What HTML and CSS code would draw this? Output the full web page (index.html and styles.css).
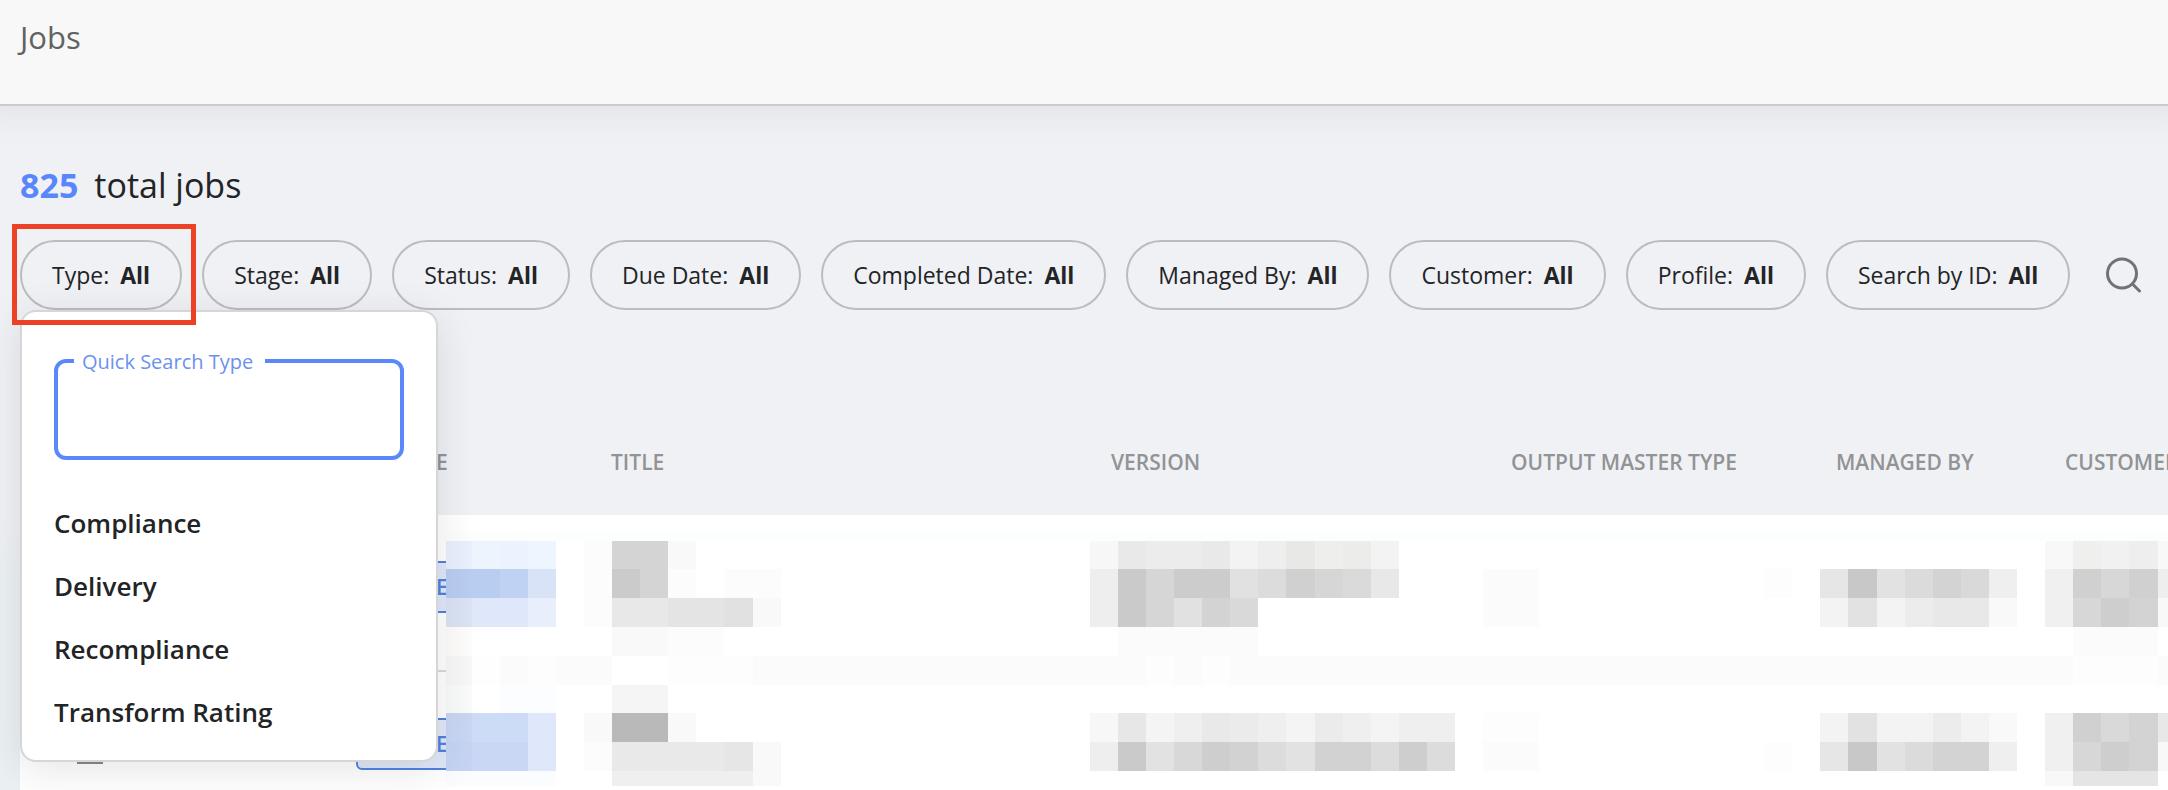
FILE: index.html
```html
<!DOCTYPE html>
<html lang="en">
<head>
<meta charset="utf-8">
<title>Jobs</title>
<link rel="stylesheet" href="styles.css">
</head>
<body>
<header class="topbar"><h1 class="topbar-title">Jobs</h1></header>
<main class="content">
  <p class="total"><strong class="total-count">825</strong><span>total jobs</span></p>

  <div class="filters">
    <div class="filter">
      <button class="pill" type="button" aria-expanded="true">Type: <b>All</b></button>
      <div class="menu">
        <div class="field">
          <label class="field-label" for="quick-search">Quick Search Type</label>
          <input class="field-input" id="quick-search" type="text">
        </div>
        <div class="options">
          <button class="option" type="button">Compliance</button>
          <button class="option" type="button">Delivery</button>
          <button class="option" type="button">Recompliance</button>
          <button class="option" type="button">Transform Rating</button>
        </div>
      </div>
      <div class="highlight"></div>
    </div>
    <button class="pill" type="button">Stage: <b>All</b></button>
    <button class="pill" type="button">Status: <b>All</b></button>
    <button class="pill" type="button">Due Date: <b>All</b></button>
    <button class="pill" type="button">Completed Date: <b>All</b></button>
    <button class="pill" type="button">Managed By: <b>All</b></button>
    <button class="pill" type="button">Customer: <b>All</b></button>
    <button class="pill" type="button">Profile: <b>All</b></button>
    <button class="pill" type="button">Search by ID: <b>All</b></button>
    <button class="search" type="button" aria-label="Search">
      <svg width="36" height="36" viewBox="0 0 36 36" fill="none" stroke="#707274" stroke-width="3" stroke-linecap="round"><circle cx="16" cy="16.500" r="14.500"/><path d="M26.500 27 33.500 34"/></svg>
    </button>
  </div>

  <div class="table-wrap">
    <table class="jobs">
      <colgroup><col class="c-select"><col class="c-type"><col class="c-title"><col class="c-version"><col class="c-output"><col class="c-managed"><col></colgroup>
      <thead>
        <tr><th></th><th class="th-type">E</th><th>TITLE</th><th>VERSION</th><th>OUTPUT MASTER TYPE</th><th>MANAGED BY</th><th>CUSTOMER</th></tr>
      </thead>
      <tbody>
        <tr><td class="td-select"><input class="check" type="checkbox" aria-label="Select job 1"></td><td><span class="badge">E</span></td><td></td><td></td><td></td><td></td><td></td></tr>
        <tr><td class="td-select"><input class="check" type="checkbox" aria-label="Select job 2"></td><td><span class="badge">E</span></td><td></td><td></td><td></td><td></td><td></td></tr>
      </tbody>
    </table>
    <svg class="mosaic" width="1722" height="254" shape-rendering="crispEdges" aria-hidden="true">
      <rect width="1722" height="254" fill="#fff"/>
      <rect width="1722" height="9" fill="#fcfdfd"/>
      <g transform="translate(-2.600 8.600) scale(28.100 28.800)">
        <!-- type -->
        <path fill="#e9effc" d="M0 0h1v1H0z"/><path fill="#edf4fe" d="M1 0h1v1H1z"/><path fill="#ebf3fe" d="M2 0h1v1H2z"/><path fill="#eff5fe" d="M3 0h1v1H3z"/>
        <path fill="#b9cdf1" d="M0 1h2v1H0z"/><path fill="#bfd2f4" d="M2 1h1v1H2z"/><path fill="#d9e3f7" d="M3 1h1v1H3z"/>
        <path fill="#dae2f4" d="M0 2h1v1H0z"/><path fill="#dfe7fa" d="M1 2h2v1H1z"/><path fill="#e8eefb" d="M3 2h1v1H3z"/>
        <path fill="#fdfcfa" d="M0 3h1v1H0z"/>
        <path fill="#fbfbfb" d="M0 4h62v1H0z"/><path fill="#f7f7f7" d="M0 4h1v1H0z"/><path fill="#fefefe" d="M1 4h1v1H1z"/><path fill="#fdfdfd" d="M3 4h1v1H3z"/><path fill="#fff" d="M6 4h2v1H6z"/><path fill="#fdfdfd" d="M8 4h3v1H8z"/>
        <path fill="#f9fbfa" d="M0 5h1v1H0z"/><path fill="#fcfdfe" d="M2 5h2v1H2z"/>
        <path fill="#c8d6f3" d="M0 6h1v1H0z"/><path fill="#ccdcf6" d="M1 6h2v1H1z"/><path fill="#c5d4f3" d="M0 7h1v1H0z"/><path fill="#c9d7f5" d="M1 7h2v1H1z"/><path fill="#dfe8fb" d="M3 6h1v2H3z"/><path fill="#fafcfe" d="M0 8h4v1H0z"/>
        <!-- title -->
        <path fill="#fcfcfc" d="M5 0h1v3H5zM5 7h1v1H5zM8 1h1v1H8zM10 1h2v1h-2zM8 3h2v1H8z"/><path fill="#f9f9f9" d="M5 6h1v1H5zM8 6h1v1H8zM8 0h1v1H8zM6 3h2v1H6zM11 2h1v1h-1zM11 7h1v2h-1z"/>
        <path fill="#d4d4d4" d="M6 0h2v2H6z"/><path fill="#cbcbcb" d="M6 1h1v1H6z"/><path fill="#e8e8e8" d="M6 2h2v1H6z"/><path fill="#e4e4e4" d="M8 2h2v1H8z"/><path fill="#e1e1e1" d="M10 2h1v1h-1z"/>
        <path fill="#f5f5f5" d="M6 5h2v1H6z"/><path fill="#b9b9b9" d="M6 6h2v1H6z"/><path fill="#e9e9e9" d="M6 7h4v1H6z"/><path fill="#e6e6e6" d="M10 7h1v1h-1z"/><path fill="#efefef" d="M6 8h5v1H6z"/>
      </g>
      <g transform="translate(166 8.600) scale(28.100 28.800)">
        <!-- version -->
        <path fill="#fdfdfd" d="M19 4h1v1h-1zM21 4h1v1h-1zM52 4h3v1h-3z"/>
        <path fill="#f7f7f7" d="M17 0h1v1h-1zM17 6h1v1h-1z"/><path fill="#e9e9e9" d="M18 0h1v1h-1zM21 0h1v1h-1z"/><path fill="#ececec" d="M19 0h2v1h-2z"/><path fill="#f3f3f3" d="M22 0h1v1h-1zM27 0h1v1h-1z"/><path fill="#eee" d="M23 0h1v1h-1z"/><path fill="#e8e8e6" d="M24 0h1v1h-1z"/><path fill="#eeeeec" d="M25 0h1v1h-1z"/><path fill="#ececea" d="M26 0h1v1h-1z"/>
        <path fill="#eee" d="M17 1h1v2h-1zM17 7h1v1h-1z"/><path fill="#cacaca" d="M18 1h1v2h-1zM18 7h1v1h-1z"/><path fill="#d6d6d6" d="M19 1h1v2h-1zM25 1h1v1h-1z"/><path fill="#ccc" d="M20 1h2v1h-2z"/><path fill="#e1e1e1" d="M22 1h1v1h-1zM20 2h1v1h-1z"/><path fill="#dcdcdc" d="M23 1h1v1h-1z"/><path fill="#d0d0d0" d="M24 1h1v1h-1z"/><path fill="#dadada" d="M26 1h1v1h-1z"/><path fill="#e8e8e8" d="M27 1h1v1h-1z"/>
        <path fill="#d3d3d3" d="M21 2h1v1h-1z"/><path fill="#d9d9d9" d="M22 2h1v1h-1z"/><path fill="#fbfbfb" d="M18 3h5v1h-5z"/>
        <path fill="#e7e7e7" d="M18 6h1v1h-1z"/><path fill="#f4f4f4" d="M19 6h1v1h-1zM24 6h1v1h-1zM27 6h1v1h-1z"/><path fill="#efefef" d="M20 6h1v1h-1zM23 6h1v1h-1zM26 6h1v1h-1zM28 6h2v1h-2z"/><path fill="#e9e9e9" d="M21 6h1v1h-1z"/><path fill="#ebebeb" d="M22 6h1v1h-1zM25 6h1v1h-1z"/>
        <path fill="#e2e2e2" d="M19 7h1v1h-1zM24 7h1v1h-1z"/><path fill="#d8d8d8" d="M20 7h1v1h-1z"/><path fill="#cecece" d="M21 7h1v1h-1zM28 7h1v1h-1z"/><path fill="#d2d2d2" d="M22 7h1v1h-1zM25 7h2v1h-2z"/><path fill="#dcdcdc" d="M23 7h1v1h-1zM27 7h1v1h-1zM29 7h1v1h-1z"/>
        <!-- output master type -->
        <path fill="#fbfbfb" d="M31 1h2v2h-2zM31 7h2v1h-2z"/><path fill="#fdfdfd" d="M31 6h2v1h-2zM41 1h1v1h-1zM41 7h1v1h-1z"/>
        <!-- managed by -->
        <path fill="#e6e6e6" d="M43 1h1v1h-1zM43 7h1v1h-1z"/><path fill="#c8c8c8" d="M44 1h1v1h-1zM44 7h1v1h-1z"/><path fill="#e2e2e2" d="M45 1h1v1h-1zM45 7h1v1h-1zM44 2h1v1h-1zM44 6h1v1h-1z"/><path fill="#dbdbdb" d="M46 1h1v1h-1zM46 7h1v1h-1z"/><path fill="#d3d3d3" d="M47 1h1v1h-1zM47 7h2v1h-2z"/><path fill="#d9d9d9" d="M48 1h1v1h-1z"/><path fill="#efefef" d="M49 1h1v1h-1zM49 7h1v1h-1z"/>
        <path fill="#f3f3f3" d="M43 2h1v1h-1zM45 2h1v1h-1zM43 6h1v1h-1zM45 6h2v1h-2zM48 6h1v1h-1z"/><path fill="#ececec" d="M46 2h1v1h-1zM47 6h1v1h-1z"/><path fill="#e8e8e8" d="M47 2h2v1h-2z"/><path fill="#f9f9f9" d="M49 2h1v1h-1zM49 6h1v1h-1z"/>
        <!-- customer -->
        <path fill="#f8f8f8" d="M51 0h1v1h-1zM51 8h1v1h-1zM55 0h1v1h-1zM55 2h1v1h-1zM55 7h1v1h-1z"/><path fill="#efefed" d="M52 0h1v1h-1z"/><path fill="#f1f1f1" d="M53 0h1v1h-1z"/><path fill="#eee" d="M54 0h1v1h-1zM55 1h1v1h-1z"/><path fill="#f0f0f0" d="M51 1h1v2h-1zM51 6h1v2h-1z"/>
        <path fill="#d0d0d0" d="M52 1h1v1h-1zM54 1h1v1h-1zM52 6h1v1h-1z"/><path fill="#d7d7d7" d="M53 1h1v1h-1zM52 2h1v1h-1zM52 7h1v1h-1z"/><path fill="#cecece" d="M53 2h1v1h-1zM53 7h1v1h-1z"/><path fill="#d3d3d3" d="M54 2h1v1h-1zM54 6h1v2h-1z"/><path fill="#d9d9d9" d="M53 6h1v1h-1z"/><path fill="#e8e8e8" d="M55 6h1v1h-1z"/><path fill="#e5e5e5" d="M52 8h3v1h-3z"/><path fill="#fbfbfb" d="M52 3h3v1h-3z"/>
      </g>
    </svg>
  </div>
</main>
</body>
</html>
```
FILE: styles.css
```css
* { box-sizing: border-box; }

body {
  margin: 0;
  min-height: 100vh;
  overflow: hidden;
  background: linear-gradient(#f0f1f5 520px, #ebf0f3 580px);
  color: #222426;
  font-family: "Open Sans", "Noto Sans", sans-serif;
}

button, input { font: inherit; color: inherit; }

.topbar {
  position: relative;
  padding: 14px 20px 44px;
  background: #f8f8f8;
  border-bottom: 2px solid #cbcbcc;
  box-shadow: 0 -18px 36px 24px rgba(40, 45, 60, 0.08);
}

.topbar-title {
  margin: 0;
  font-size: 31px;
  line-height: 46px;
  font-weight: 400;
  color: #626262;
}

.content { padding: 56px 0 0 20px; }

.total {
  display: flex;
  gap: 16px;
  margin: 0 0 32px;
  font-size: 34px;
  line-height: 46px;
}

.total-count { color: #5987fb; font-weight: 700; }

.filters {
  display: flex;
  align-items: center;
  gap: 20px;
}

.filter { position: relative; }

.pill {
  display: flex;
  align-items: center;
  gap: 11px;
  height: 70px;
  padding: 0 30px;
  border: 2px solid #bbbcbe;
  border-radius: 35px;
  background: none;
  font-size: 23px;
  line-height: 34px;
  white-space: nowrap;
}

.pill b { font-weight: 700; }

.search {
  display: flex;
  margin-left: 16px;
  padding: 0;
  border: 0;
  background: none;
}

.highlight {
  position: absolute;
  inset: -16px -14px -15px -8px;
  z-index: 3;
  border: 5px solid #ed4127;
  pointer-events: none;
}

.menu {
  position: absolute;
  top: 100%;
  left: 0;
  z-index: 2;
  width: 418px;
  padding: 47px 32px 17px;
  border: 2px solid #d6d6d7;
  border-radius: 16px;
  background: #fff;
  box-shadow: 0 8px 40px rgba(40, 40, 50, 0.12);
}

.field { position: relative; margin-bottom: 31px; }

.field-label {
  position: absolute;
  top: -12px;
  left: 20px;
  padding: 0 12px 0 8px;
  background: #fff;
  color: #6c92ec;
  font-size: 20px;
  line-height: 30px;
}

.field-input {
  display: block;
  width: 100%;
  height: 101px;
  padding: 0 20px;
  border: 4px solid #5a88fb;
  border-radius: 12px;
  outline: 0;
  background: #fff;
  font-size: 24px;
}

.options { display: flex; flex-direction: column; }

.option {
  height: 63px;
  padding: 0;
  border: 0;
  background: none;
  font-size: 26px;
  font-weight: 600;
  text-align: left;
}

.table-wrap {
  position: relative;
  margin-top: 138px;
  overflow: hidden;
}

.jobs {
  width: 100%;
  table-layout: fixed;
  border-collapse: collapse;
}

.c-select { width: 336px; }
.c-type { width: 255px; }
.c-title { width: 500px; }
.c-version { width: 400px; }
.c-output { width: 325px; }
.c-managed { width: 229px; }

.jobs th {
  padding: 0 0 39px;
  color: #929395;
  font-size: 21px;
  line-height: 28px;
  font-weight: 600;
  text-align: left;
  white-space: nowrap;
}

.jobs .th-type { padding-left: 80px; }

.jobs tbody tr { height: 156px; background: #fff; border-bottom: 2px solid #d9d9da; }

.jobs td { padding: 46px 0 0; vertical-align: top; }

.jobs .td-select { padding: 66px 0 0 57px; }

.check {
  display: block;
  width: 26px;
  height: 26px;
  margin: 0;
  appearance: none;
  border: 2px solid #858585;
}

.badge {
  display: block;
  width: 190px;
  height: 52px;
  padding-left: 78px;
  border: 2px solid #4f82dd;
  border-radius: 6px;
  background: #dfe7f9;
  color: #4f82dd;
  font-size: 21px;
  line-height: 48px;
  font-weight: 600;
}

.mosaic {
  position: absolute;
  top: 84px;
  left: 426px;
}
```
